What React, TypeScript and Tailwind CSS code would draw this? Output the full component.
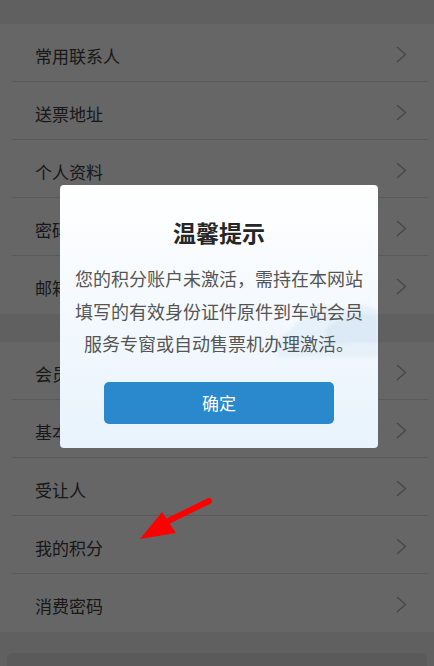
const SECTION_ONE = ["常用联系人", "送票地址", "个人资料", "密码修改", "邮箱验证"];
const SECTION_TWO = ["会员信息", "基本信息", "受让人", "我的积分", "消费密码"];

function Chevron() {
  return (
    <svg width="11" height="17" viewBox="0 0 11 17" fill="none" className="mb-[3px]">
      <path d="M1.5 1.5 L9.5 8.5 L1.5 15.5" stroke="#b4b4b4" strokeWidth="1.6" strokeLinejoin="round" strokeLinecap="round" />
    </svg>
  );
}

function MenuSection({ items }: { items: string[] }) {
  return (
    <ul className="bg-white">
      {items.map((label, i) => (
        <li key={label} className="ml-3 mr-[6px]">
          <div
            className={`flex h-[58px] items-center justify-between pl-[23px] pr-[21px] pt-[6px] ${
              i < items.length - 1 ? "border-b border-[#e2e2e2]" : ""
            }`}
          >
            <span className="text-[17px] text-[#3c3c3c]">{label}</span>
            <Chevron />
          </div>
        </li>
      ))}
    </ul>
  );
}

function Watermark() {
  return (
    <svg
      className="pointer-events-none absolute right-0 top-[92px] blur-[1.5px]"
      width="100"
      height="80"
      viewBox="0 0 100 80"
      fill="none"
    >
      <path d="M0 62 C20 50 30 30 44 26 C54 34 60 38 70 30 C80 24 92 30 100 34 L100 80 L0 80 Z" fill="#dbeaf6" opacity="0.5" />
      <path d="M48 52 C62 40 80 36 100 38 L100 66 C80 64 64 66 48 70 Z" fill="#cfe3f4" opacity="0.5" />
    </svg>
  );
}

export default function App() {
  return (
    <div
      className="relative h-[666px] w-[434px] overflow-hidden bg-[#efefef]"
      style={{ fontFamily: '"Noto Sans CJK SC", "Noto Sans", sans-serif' }}
    >
      <div className="h-[24px]" />
      <MenuSection items={SECTION_ONE} />
      <div className="h-[28px]" />
      <MenuSection items={SECTION_TWO} />
      <div className="h-[21px]" />
      <div className="mx-[7px] h-[50px] rounded-md bg-[#e2e2e2]" />

      {/* dimmed backdrop */}
      <div className="absolute inset-0 bg-black/60" />

      {/* dialog */}
      <div className="absolute inset-0 flex items-start justify-center pl-[4px] pt-[185px]">
        <div className="relative h-[263px] w-[318px] overflow-hidden rounded-[4px] bg-gradient-to-b from-white to-[#e8f3fc]">
          <Watermark />
          <div className="relative flex flex-col items-center">
            <h2 className="mt-[31px] text-[23px] font-bold leading-[32px] text-[#262626]">温馨提示</h2>
            <p className="mt-[14px] px-[13px] text-center text-[18px] leading-[32.5px] text-[#555]">
              您的积分账户未激活，需持在本网站填写的有效身份证件原件到车站会员服务专窗或自动售票机办理激活。
            </p>
            <button className="mt-[22px] h-[42px] w-[230px] rounded-[5px] bg-[#2a88cd] text-[17px] text-white">
              确定
            </button>
          </div>
        </div>
      </div>

      {/* red annotation arrow */}
      <svg className="pointer-events-none absolute left-0 top-0" width="434" height="666" viewBox="0 0 434 666">
        <line x1="209" y1="501" x2="160" y2="525" stroke="#ff0000" strokeWidth="6" strokeLinecap="round" />
        <polygon points="140,539 162,512 176,533" fill="#ff0000" />
      </svg>
    </div>
  );
}
